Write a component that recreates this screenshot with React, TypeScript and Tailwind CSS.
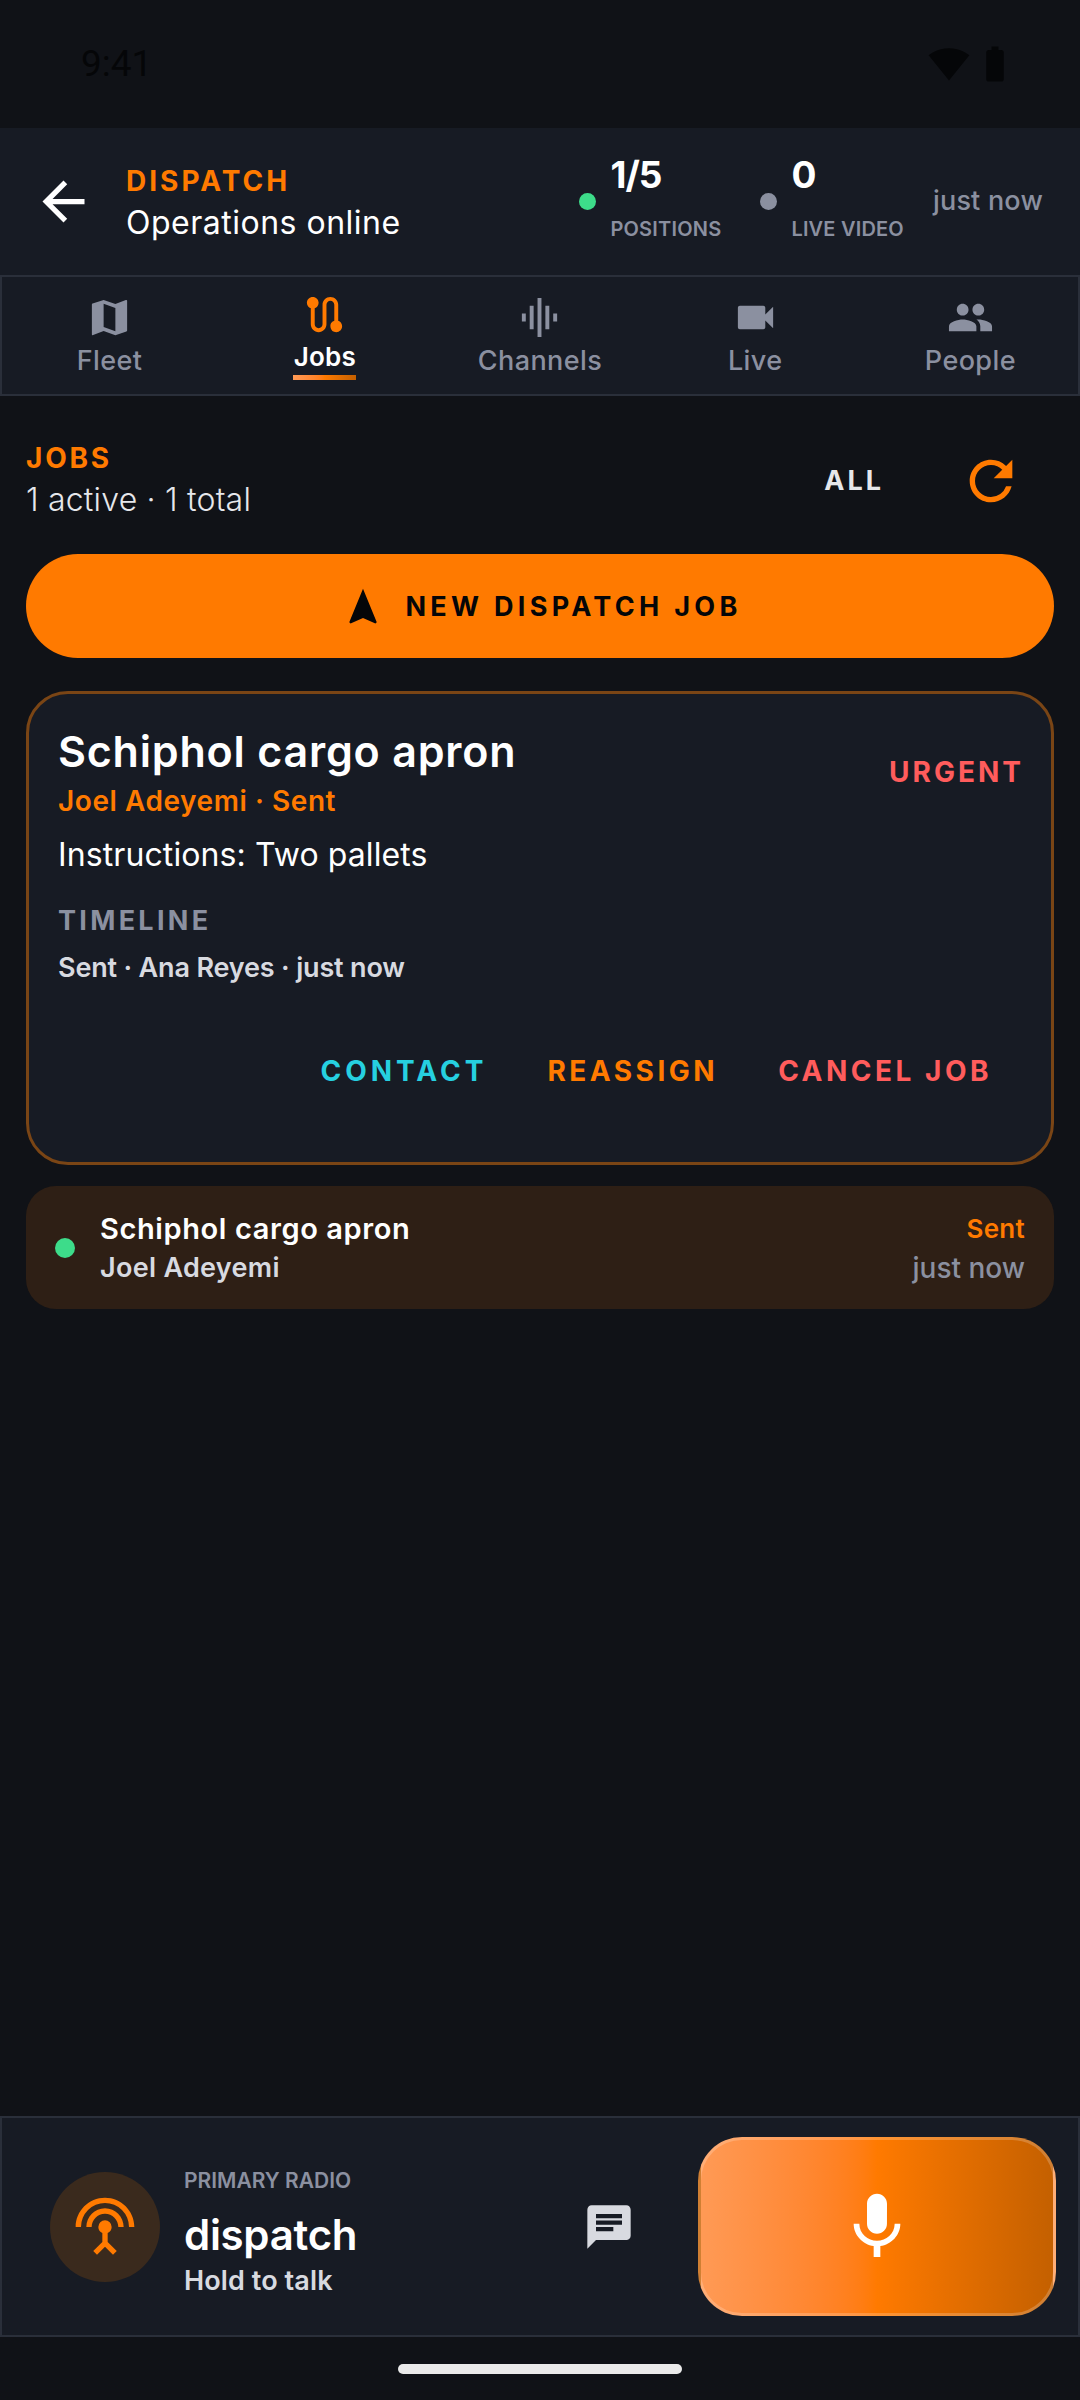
import {
  MdArrowBack,
  MdBatteryStd,
  MdChat,
  MdGraphicEq,
  MdMap,
  MdMic,
  MdNavigation,
  MdPeople,
  MdRefresh,
  MdRoute,
  MdSettingsInputAntenna,
  MdSignalWifi4Bar,
  MdVideocam,
} from "react-icons/md"

const tabs = [
  { label: "Fleet", Icon: MdMap },
  { label: "Jobs", Icon: MdRoute, active: true },
  { label: "Channels", Icon: MdGraphicEq },
  { label: "Live", Icon: MdVideocam },
  { label: "People", Icon: MdPeople },
]

function Stat({ value, label, dot }: { value: string; label: string; dot: string }) {
  return (
    <div className="flex items-center gap-[14px]">
      <span className={`size-[17px] rounded-full ${dot}`} />
      <div className="flex flex-col pb-[8px]">
        <span className="text-[37px] leading-[44px] font-bold tracking-[-1px] text-white">{value}</span>
        <span className="mt-[19px] text-[20px] leading-[26px] font-semibold tracking-[0.2px] text-[#8b90a0]">{label}</span>
      </div>
    </div>
  )
}

function Header() {
  return (
    <header className="flex h-[147px] items-center bg-[#171b24] pl-[32px] pr-[37px]">
      <MdArrowBack className="size-[63px] text-white" />
      <div className="ml-[31px] mt-[3px] flex flex-col">
        <span className="text-[28px] leading-[36px] font-bold tracking-[3px] text-[#ff7a00]">DISPATCH</span>
        <span className="mt-[3px] text-[32px] leading-[42px] font-normal tracking-[0.5px] text-white">Operations online</span>
      </div>
      <div className="ml-auto flex items-center gap-[39px]">
        <Stat value="1/5" label="POSITIONS" dot="bg-[#3ddc8a]" />
        <Stat value="0" label="LIVE VIDEO" dot="bg-[#8b90a0]" />
        <span className="-ml-[10px] text-[27px] font-medium tracking-[0.2px] text-[#8b90a0]">just now</span>
      </div>
    </header>
  )
}

function TabBar() {
  return (
    <nav className="grid h-[121px] grid-cols-5 border-2 border-[#2a2f3a] bg-[#171b24]">
      {tabs.map(({ label, Icon, active }) => (
        <div key={label} className="flex flex-col items-center pt-[17px]">
          <Icon className={active ? "size-[47px] -mt-[3px] text-[#ff7a00]" : "size-[47px] text-[#8b90a0]"} />
          <span className={active ? "mt-[2px] text-[26px] leading-[34px] font-semibold tracking-[0.2px] text-white" : "mt-[3px] text-[27px] leading-[34px] font-medium tracking-[0.4px] text-[#8b90a0]"}>
            {label}
          </span>
          {active && (
            <span className="mt-[1px] h-[5px] w-[63px] bg-gradient-to-r from-[#ff9a55] via-[#ff7a00] to-[#c46000]" />
          )}
        </div>
      ))}
    </nav>
  )
}

function JobCard() {
  return (
    <section className="mt-[33px] h-[474px] rounded-[42px] border-[3px] border-[#7a4515] bg-[#171b24] pl-[29px] pr-[27px] pt-[29px]">
      <div className="flex items-start justify-between">
        <div className="flex flex-col">
          <h2 className="text-[43px] leading-[56px] font-semibold tracking-[0.8px] text-white">Schiphol cargo apron</h2>
          <span className="mt-[4px] text-[28px] leading-[36px] font-semibold tracking-[0.55px] text-[#ff7a00]">Joel Adeyemi · Sent</span>
        </div>
        <span className="mt-[31px] text-[28px] leading-[36px] font-bold tracking-[3px] text-[#ff5c5c]">URGENT</span>
      </div>
      <p className="mt-[15px] text-[32px] leading-[42px] tracking-[0.1px] text-white">Instructions: Two pallets</p>
      <p className="mt-[27px] text-[27px] leading-[36px] font-bold tracking-[3.3px] text-[#8b90a0]">TIMELINE</p>
      <p className="mt-[11px] text-[27px] leading-[36px] font-semibold tracking-[-0.17px] text-[#d8dae0]">Sent · Ana Reyes · just now</p>
      <div className="mt-[67px] flex justify-end gap-[60px] pr-[32px] text-[28px] leading-[36px] font-bold tracking-[3.5px]">
        <span className="tracking-[4px] text-[#26d0e0]">CONTACT</span>
        <span className="text-[#ff7a00]">REASSIGN</span>
        <span className="text-[#ff5c5c]">CANCEL JOB</span>
      </div>
    </section>
  )
}

function JobRow() {
  return (
    <section className="mt-[21px] flex h-[123px] items-center rounded-[30px] bg-[#2e1f15] pl-[29px] pr-[29px]">
      <span className="size-[20px] rounded-full bg-[#3ddc8a]" />
      <div className="ml-[25px] flex flex-col">
        <span className="text-[29px] leading-[38px] font-semibold tracking-[0.6px] text-white">Schiphol cargo apron</span>
        <span className="mt-[2px] text-[27px] leading-[36px] font-semibold tracking-[0.3px] text-[#d8dae0]">Joel Adeyemi</span>
      </div>
      <div className="ml-auto flex flex-col items-end">
        <span className="text-[26px] leading-[38px] font-semibold tracking-[0.3px] text-[#ff7a00]">Sent</span>
        <span className="mt-[2px] text-[28px] leading-[36px] font-medium text-[#8b90a0]">just now</span>
      </div>
    </section>
  )
}

function RadioBar() {
  return (
    <footer className="flex h-[221px] items-center border-2 border-[#2a2f3a] bg-[#171b24] pl-[48px] pr-[22px]">
      <div className="flex size-[110px] items-center justify-center rounded-full bg-[#3a2a1d]">
        <MdSettingsInputAntenna className="size-[64px] text-[#ff7a00]" />
      </div>
      <div className="ml-[24px] mt-[12px] flex flex-col">
        <span className="text-[21px] leading-[28px] font-semibold text-[#8b90a0]">PRIMARY RADIO</span>
        <span className="mt-[12px] text-[42px] leading-[56px] font-semibold tracking-[-0.3px] text-white">dispatch</span>
        <span className="text-[27px] leading-[36px] font-semibold tracking-[0.1px] text-[#d8dae0]">Hold to talk</span>
      </div>
      <MdChat className="ml-auto mr-[63px] size-[52px] text-[#d8dae0]" />
      <div className="flex h-[179px] w-[358px] items-center justify-center rounded-[44px] border-[3px] border-white/20 bg-gradient-to-r from-[#ff9a55] via-[#ff7a00] to-[#c46000]">
        <MdMic className="size-[80px] text-white" />
      </div>
    </footer>
  )
}

export default function App() {
  return (
    <div className="flex h-[2400px] w-[1080px] flex-col bg-[#101217] font-['Inter',sans-serif]">
      <div className="flex h-[128px] items-center justify-between pl-[81px] pr-[64px]">
        <span className="font-['Roboto',sans-serif] text-[37px] text-[#050608]">9:41</span>
        <div className="flex items-center gap-[4px] text-[#050608]">
          <MdSignalWifi4Bar className="size-[42px]" />
          <MdBatteryStd className="size-[42px]" />
        </div>
      </div>
      <Header />
      <TabBar />
      <main className="flex-1 px-[26px] pt-[44px]">
        <div className="flex items-center justify-between">
          <div className="flex flex-col">
            <span className="text-[28px] leading-[36px] font-bold tracking-[2.8px] text-[#ff7a00]">JOBS</span>
            <span className="mt-[3px] text-[32px] leading-[42px] font-light tracking-[0.2px] text-[#e6e7eb]">1 active · 1 total</span>
          </div>
          <div className="flex items-center gap-[75px] pr-[31px]">
            <span className="pt-[2px] text-[27px] font-bold tracking-[3px] text-[#e6e7eb]">ALL</span>
            <MdRefresh className="size-[64px] text-[#ff7a00]" />
          </div>
        </div>
        <button className="mt-[33px] flex h-[104px] w-full items-center justify-center gap-[20px] rounded-full bg-[#ff7a00] pl-[3px] pt-[2px] text-[27px] font-bold tracking-[4.3px] text-[#050608]">
          <MdNavigation className="size-[44px]" />
          NEW DISPATCH JOB
        </button>
        <JobCard />
        <JobRow />
      </main>
      <RadioBar />
      <div className="flex h-[63px] items-start justify-center pt-[27px]">
        <span className="h-[10px] w-[284px] rounded-full bg-[#eaeaea]" />
      </div>
    </div>
  )
}
